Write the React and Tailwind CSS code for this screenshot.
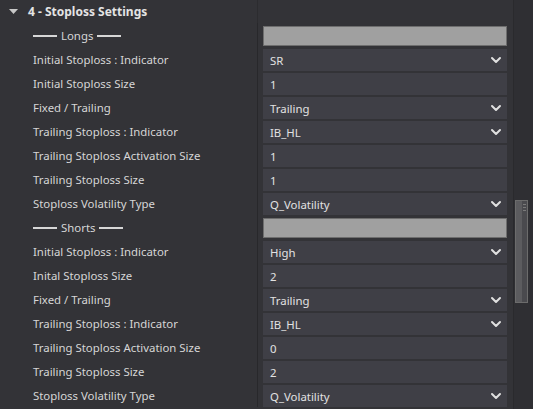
import { ChevronDown } from 'lucide-react';

const rows = [
  { label: 'Longs', section: true },
  { label: 'Initial Stoploss : Indicator', value: 'SR', select: true },
  { label: 'Initial Stoploss Size', value: '1' },
  { label: 'Fixed / Trailing', value: 'Trailing', select: true },
  { label: 'Trailing Stoploss : Indicator', value: 'IB_HL', select: true },
  { label: 'Trailing Stoploss Activation Size', value: '1' },
  { label: 'Trailing Stoploss Size', value: '1' },
  { label: 'Stoploss Volatility Type', value: 'Q_Volatility', select: true },
  { label: 'Shorts', section: true },
  { label: 'Initial Stoploss : Indicator', value: 'High', select: true },
  { label: 'Inital Stoploss Size', value: '2' },
  { label: 'Fixed / Trailing', value: 'Trailing', select: true },
  { label: 'Trailing Stoploss : Indicator', value: 'IB_HL', select: true },
  { label: 'Trailing Stoploss Activation Size', value: '0' },
  { label: 'Trailing Stoploss Size', value: '2' },
  { label: 'Stoploss Volatility Type', value: 'Q_Volatility', select: true },
];

function Field({ row }) {
  if (row.section) {
    return <div className="h-[20px] mt-[1px] bg-[#a0a0a0] border border-[#6e6e6e]" />;
  }
  return (
    <div className="h-[22px] bg-[#3f3f46] flex items-center pl-[7px] pr-[3px] text-[#e2e2e2]">
      <span className="flex-1 pt-[1px]">{row.value}</span>
      {row.select && <ChevronDown size={16} strokeWidth={3} className="text-[#e0e0e0]" />}
    </div>
  );
}

export default function App() {
  return (
    <div
      className="w-[533px] h-[409px] overflow-hidden bg-[#333337] flex text-[11.4px] text-[#d6d6d6]"
      style={{ fontFamily: '"Noto Sans", "Open Sans", sans-serif' }}
    >
      <div className="w-[513px] flex flex-col">
        {/* Category header */}
        <div className="h-[23px] flex items-center">
          <div className="w-[258px] h-full flex items-center pl-[9px] gap-[10px] border-r border-[#2c2c2f]">
            <svg width="9" height="5" viewBox="0 0 9 5">
              <path d="M0 0H9L4.5 5Z" fill="#c8c8c8" />
            </svg>
            <span className="font-bold text-[12px] text-[#e4e4e4] pt-[1px]">4 - Stoploss Settings</span>
          </div>
        </div>

        {rows.map((row, i) => (
          <div key={i} className="h-6 flex shrink-0">
            <div className="w-[258px] border-r border-[#28282b] pl-[33px] pt-[2px] flex items-center">
              {row.section ? (
                <span className="flex items-center gap-[4px]">
                  <span className="w-[24px] h-[2px] bg-[#d6d6d6]" />
                  {row.label}
                  <span className="w-[24px] h-[2px] bg-[#d6d6d6]" />
                </span>
              ) : (
                row.label
              )}
            </div>
            <div className="flex-1 pl-[5px] pr-[6px] pt-[2px]">
              <Field row={row} />
            </div>
          </div>
        ))}
      </div>

      {/* Scrollbar */}
      <div className="flex-1 bg-[#2f2f33] border-l border-[#2a2a2d] pt-[200px] pl-[1px] pr-[5px]">
        <div className="h-[103px] border border-[#6c6c6c] bg-[#4a4a4e] flex">
          <div className="w-[6px] bg-[#5c5c5f]" />
          <div className="flex-1 flex flex-col gap-[2px] pt-[3px] px-[1px]">
            <span className="h-px bg-[#7a7a7a]" />
            <span className="h-px bg-[#7a7a7a]" />
            <span className="h-px bg-[#7a7a7a]" />
          </div>
        </div>
      </div>
    </div>
  );
}
